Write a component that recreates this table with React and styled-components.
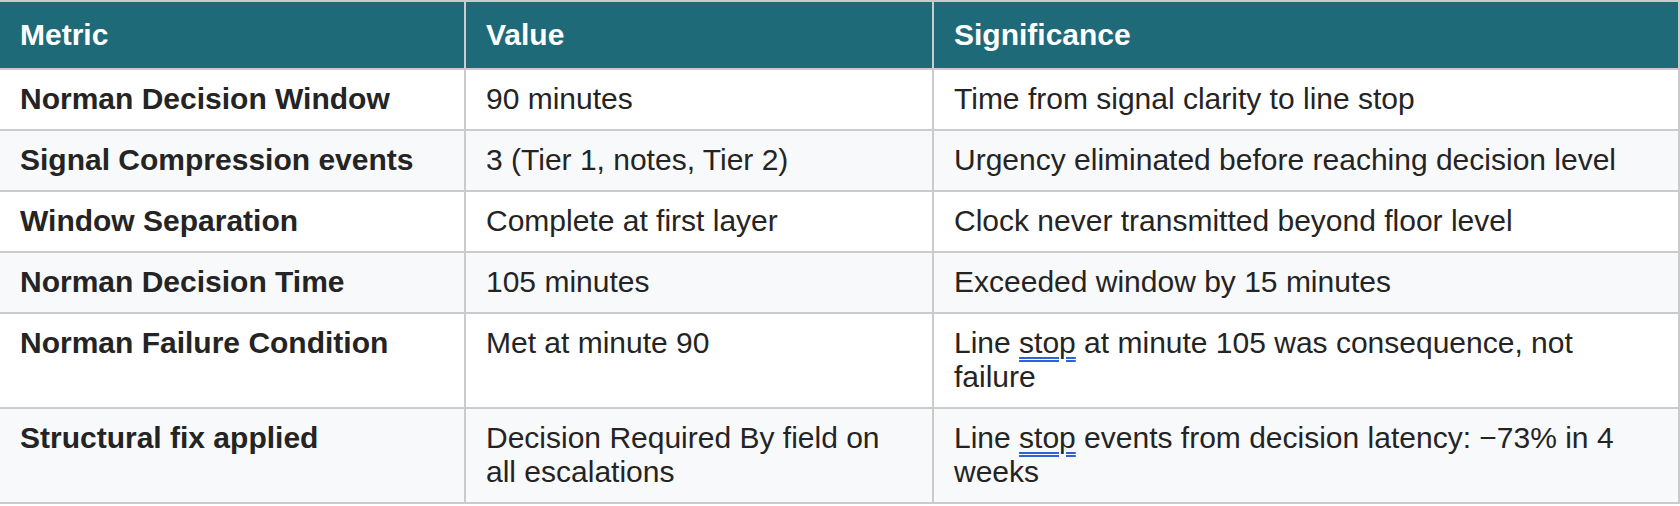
import React from "react";
import styled, { createGlobalStyle } from "styled-components";

const Global = createGlobalStyle`
  html, body { margin: 0; padding: 0; background: #ffffff; }
  body { font-family: "Liberation Sans", Arial, Helvetica, sans-serif; }
`;

const Table = styled.div`
  display: grid;
  grid-template-columns: 464px 466px 744px;
  gap: 2px;
  padding: 2px 2px 2px 0;
  width: 1680px;
  box-sizing: border-box;
  background: #cbcbcb;
  font-size: 30px;
  line-height: 34px;
`;

const HeaderCell = styled.div`
  background: #1f6a79;
  color: #ffffff;
  font-weight: 700;
  padding: 16px 20px;
`;

const Cell = styled.div`
  background: ${(p) => (p.$alt ? "#f8f9fb" : "#ffffff")};
  color: #242424;
  font-weight: ${(p) => (p.$bold ? 700 : 400)};
  padding: 12px 20px 13px 20px;
`;

const Flag = styled.span`
  text-decoration-line: underline;
  text-decoration-style: double;
  text-decoration-color: #2f62d6;
  text-decoration-thickness: 1.5px;
  text-underline-offset: 4px;
`;

const rows = [
  ["Norman Decision Window", "90 minutes", "Time from signal clarity to line stop"],
  ["Signal Compression events", "3 (Tier 1, notes, Tier 2)", "Urgency eliminated before reaching decision level"],
  ["Window Separation", "Complete at first layer", "Clock never transmitted beyond floor level"],
  ["Norman Decision Time", "105 minutes", "Exceeded window by 15 minutes"],
  [
    "Norman Failure Condition",
    "Met at minute 90",
    <>Line <Flag>stop</Flag> at minute 105 was consequence, not failure</>,
  ],
  [
    "Structural fix applied",
    "Decision Required By field on all escalations",
    <>Line <Flag>stop</Flag> events from decision latency: −73% in 4 weeks</>,
  ],
];

export default function App() {
  return (
    <>
      <Global />
      <Table role="table">
        <HeaderCell role="columnheader">Metric</HeaderCell>
        <HeaderCell role="columnheader">Value</HeaderCell>
        <HeaderCell role="columnheader">Significance</HeaderCell>
        {rows.map((r, i) => (
          <React.Fragment key={i}>
            <Cell role="cell" $alt={i % 2 === 1} $bold>{r[0]}</Cell>
            <Cell role="cell" $alt={i % 2 === 1}>{r[1]}</Cell>
            <Cell role="cell" $alt={i % 2 === 1}>{r[2]}</Cell>
          </React.Fragment>
        ))}
      </Table>
    </>
  );
}
